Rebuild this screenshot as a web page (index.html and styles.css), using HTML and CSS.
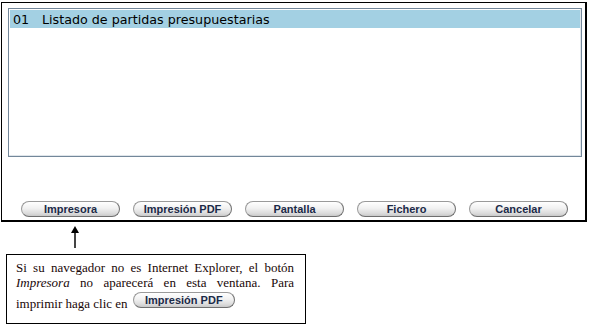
FILE: index.html
```html
<!DOCTYPE html>
<html lang="es">
<head>
    <meta charset="UTF-8">
    <title>Listados</title>
    <link rel="stylesheet" href="styles.css">
</head>
<body>
    <div class="panel">
        <div class="listbox">
            <div class="row selected">
                <span class="code">01</span>
                <span>Listado de partidas presupuestarias</span>
            </div>
        </div>
        <div class="actions">
            <button class="pill">Impresora</button>
            <button class="pill">Impresión PDF</button>
            <button class="pill">Pantalla</button>
            <button class="pill">Fichero</button>
            <button class="pill">Cancelar</button>
        </div>
    </div>

    <!-- Arrow pointing at the Impresora button -->
    <svg class="arrow" width="10" height="22" viewBox="0 0 10 22">
        <line x1="5" y1="5" x2="5" y2="22" stroke="#444" stroke-width="2"/>
        <polygon points="5,0 1,7 9,7" fill="#000"/>
    </svg>

    <div class="note">
        Si su navegador no es Internet Explorer, el botón
        <em>Impresora</em> no aparecerá en esta ventana. Para
        imprimir haga clic en <span class="pill pill-inline">Impresión PDF</span>
    </div>
</body>
</html>
```

FILE: styles.css
```css
* {
    box-sizing: border-box;
}

body {
    margin: 0;
    background: #fff;
}

.panel {
    width: 586px;
    height: 220px;
    margin: 2px 0 0 1px;
    padding: 5px 3px 0 6px;
    border: 1px solid #000;
    border-right-width: 2px;
    border-bottom-width: 2px;
}

.listbox {
    height: 149px;
    padding: 1px;
    border: 1px solid #73879a;
    box-shadow: inset -1px -1px 0 #dfe5ea;
}

.row {
    display: flex;
    align-items: center;
    height: 18px;
    padding-left: 3px;
    font-family: "DejaVu Sans", Verdana, sans-serif;
    font-size: 12.7px;
    color: #000;
}

.row.selected {
    background: #a3d0e3;
}

.code {
    width: 29px;
}

.actions {
    display: flex;
    gap: 13px;
    margin-top: 44px;
    padding-left: 13px;
}

.pill {
    display: inline-flex;
    align-items: center;
    justify-content: center;
    width: 99px;
    height: 16px;
    padding: 0;
    font-family: Tahoma, "Liberation Sans", Arial, sans-serif;
    font-size: 11px;
    font-weight: bold;
    color: #1b2a48;
    background: linear-gradient(#ffffff, #f1f1f1 45%, #dcdcdc 80%, #c9c9c9);
    border: 1px solid #9a9a9a;
    border-right-color: #6f6f6f;
    border-bottom-color: #6f6f6f;
    border-radius: 8px;
}

.arrow {
    display: block;
    margin: 4px 0 0 70px;
}

.note {
    width: 300px;
    margin: 6px 0 0 6px;
    padding: 5px 11px 12px 9px;
    border: 1px solid #000;
    font-family: "Liberation Serif", "DejaVu Serif", "Times New Roman", serif;
    font-size: 13px;
    line-height: 15px;
    text-align: justify;
    color: #1a0808;
}

.pill-inline {
    width: 102px;
    margin: 2px 0 0 2px;
    vertical-align: 4px;
    line-height: 14px;
}
```
